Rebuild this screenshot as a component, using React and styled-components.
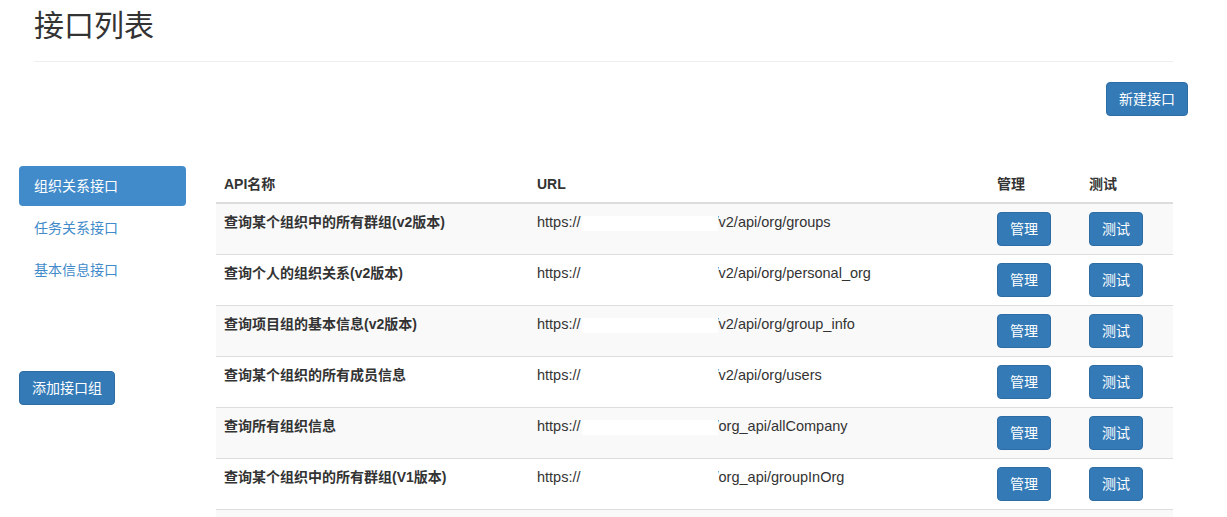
import React from "react";
import styled, { createGlobalStyle } from "styled-components";

const GlobalStyle = createGlobalStyle`
  html, body {
    margin: 0;
    padding: 0;
    overflow: hidden;
    background: #fff;
  }
  body {
    font-family: "Liberation Sans", Arial, "Noto Sans CJK SC", sans-serif;
    font-size: 14px;
    line-height: 20px;
    color: #333;
  }
`;

const apis = [
  { name: "查询某个组织中的所有群组(v2版本)", path: "/v2/api/org/groups" },
  { name: "查询个人的组织关系(v2版本)", path: "/v2/api/org/personal_org" },
  { name: "查询项目组的基本信息(v2版本)", path: "/v2/api/org/group_info" },
  { name: "查询某个组织的所有成员信息", path: "/v2/api/org/users" },
  { name: "查询所有组织信息", path: "/org_api/allCompany" },
  { name: "查询某个组织中的所有群组(V1版本)", path: "/org_api/groupInOrg" },
];

const groups = ["组织关系接口", "任务关系接口", "基本信息接口"];

const App = () => {
  return (
    <>
      <GlobalStyle />
      <PageHeader>
        <Title>接口列表</Title>
      </PageHeader>

      <Toolbar>
        <Button>新建接口</Button>
      </Toolbar>

      <Main>
        <Sidebar>
          <Pills>
            {groups.map((g, i) => (
              <Pill key={g} $active={i === 0}>
                {g}
              </Pill>
            ))}
          </Pills>
          <AddGroup>
            <Button>添加接口组</Button>
          </AddGroup>
        </Sidebar>

        <Table>
          <colgroup>
            <col style={{ width: 313 }} />
            <col style={{ width: 460 }} />
            <col style={{ width: 92 }} />
            <col style={{ width: 92 }} />
          </colgroup>
          <thead>
            <tr>
              <Th>API名称</Th>
              <Th>URL</Th>
              <Th>管理</Th>
              <Th>测试</Th>
            </tr>
          </thead>
          <tbody>
            {apis.map((api) => (
              <Row key={api.path}>
                <NameCell>{api.name}</NameCell>
                <UrlCell>
                  https://
                  <Redact />
                  {api.path}
                </UrlCell>
                <Td>
                  <Button>管理</Button>
                </Td>
                <Td>
                  <Button>测试</Button>
                </Td>
              </Row>
            ))}
            {/* next row, only its top edge shows in the frame */}
            <Row>
              <Td colSpan={4}>
                <Spacer />
              </Td>
            </Row>
          </tbody>
        </Table>
      </Main>
    </>
  );
};

const PageHeader = styled.div`
  margin: 0 54px 0 34px;
  padding: 9px 0 9px;
  border-bottom: 1px solid #eee;
`;

const Title = styled.h2`
  margin: 0 0 10px;
  font-size: 30px;
  line-height: 33px;
  font-weight: normal;
  color: #333;
`;

const Toolbar = styled.div`
  display: flex;
  justify-content: flex-end;
  margin-top: 20px;
  padding-right: 39px;
`;

const Button = styled.button`
  display: inline-block;
  padding: 6px 12px;
  font-family: inherit;
  font-size: 14px;
  line-height: 20px;
  color: #fff;
  background: #337ab7;
  border: 1px solid #2e6da4;
  border-radius: 4px;
  cursor: pointer;
  white-space: nowrap;

  &:hover {
    background: #286090;
  }
`;

const Main = styled.div`
  display: flex;
  align-items: flex-start;
  gap: 30px;
  margin-top: 50px;
  padding: 0 54px 0 19px;
`;

const Sidebar = styled.div`
  width: 167px;
  flex-shrink: 0;
`;

const Pills = styled.ul`
  list-style: none;
  margin: 0;
  padding: 0;
`;

const Pill = styled.li`
  padding: 10px 15px;
  line-height: 20px;
  border-radius: 4px;
  color: ${(p) => (p.$active ? "#fff" : "#428bca")};
  background: ${(p) => (p.$active ? "#428bca" : "transparent")};
  cursor: pointer;

  & + & {
    margin-top: 2px;
  }
`;

const AddGroup = styled.div`
  margin-top: 81px;
`;

const Table = styled.table`
  flex: 1;
  width: 957px;
  table-layout: fixed;
  border-collapse: collapse;
  border-spacing: 0;
`;

const Th = styled.th`
  padding: 8px;
  text-align: left;
  vertical-align: bottom;
  line-height: 20px;
  font-weight: bold;
  border-bottom: 2px solid #ddd;
`;

const Row = styled.tr`
  &:nth-child(odd) {
    background: #f9f9f9;
  }
`;

const Td = styled.td`
  padding: 8px;
  line-height: 20px;
  vertical-align: top;
  border-top: 1px solid #ddd;
  white-space: nowrap;
  overflow: hidden;
`;

const NameCell = styled(Td)`
  font-weight: bold;
`;

const UrlCell = styled(Td)`
  font-size: 14.5px;
`;

const Redact = styled.span`
  display: inline-block;
  position: relative;
  top: 4px;
  z-index: 1;
  width: 136px;
  height: 15px;
  margin: 0 -3px 0 1px;
  vertical-align: top;
  background: #fff;
`;

const Spacer = styled.div`
  height: 34px;
`;

export default App;
